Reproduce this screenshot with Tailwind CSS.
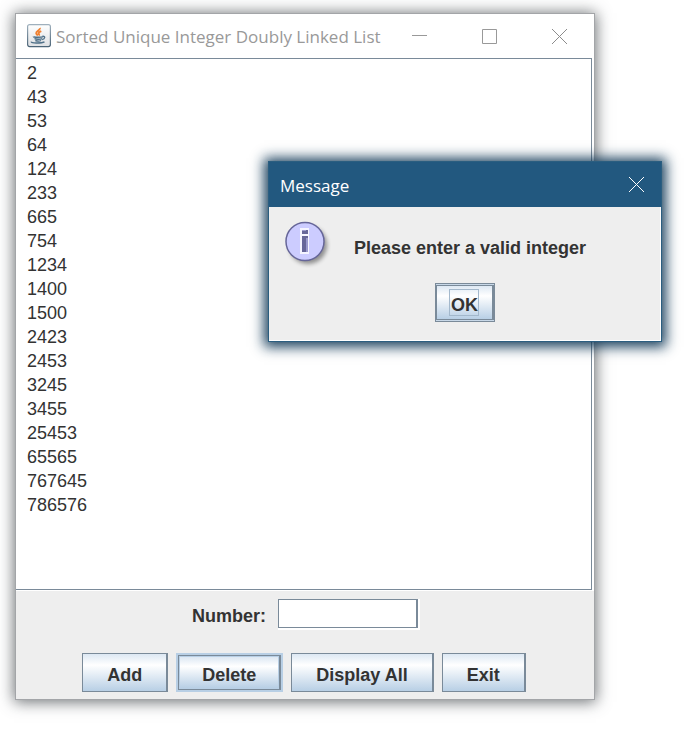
<!DOCTYPE html>
<html lang="en">
<head>
<meta charset="utf-8">
<meta name="viewport" content="width=device-width, initial-scale=1">
<title>Sorted Unique Integer Doubly Linked List</title>
<script src="https://cdn.jsdelivr.net/npm/@tailwindcss/browser@4"></script>
</head>
<body class="relative min-h-screen overflow-hidden bg-white pt-[14px] pb-[34px] pl-4 pr-[91px] font-['Liberation_Sans',Arial,sans-serif] text-lg leading-6 text-[#333333]">

<main class="flex flex-col bg-[#eeeeee] shadow-[0_0_0_1px_#a3a5a8,0_1px_14px_2px_rgba(60,65,70,0.75)]">
  <header class="flex h-11 items-center bg-white pl-[11px]">
    <svg class="h-6 w-6 shrink-0" viewBox="0 0 24 24" fill="none" aria-hidden="true">
      <defs>
        <linearGradient id="tile" x1="0" y1="0" x2="0" y2="1"><stop offset="0" stop-color="#ffffff"/><stop offset="1" stop-color="#dde0e3"/></linearGradient>
        <linearGradient id="edge" x1="0" y1="0" x2="0" y2="1"><stop offset="0" stop-color="#9fb0bd"/><stop offset="1" stop-color="#4b6477"/></linearGradient>
      </defs>
      <rect x="0.6" y="0.6" width="22.8" height="22" rx="2" fill="url(#tile)" stroke="url(#edge)" stroke-width="1.2"/>
      <path d="M12.800 4c.9 2-4 3.400-3.600 5.300.2 1 1.300 1.500 1.800 2.300M14.300 7.200c-1.700.7-2.800 1.400-2.600 2.300.1.700.9 1 .3 2" stroke="#f08030" stroke-width="1.900"/>
      <path d="M6.500 12.500c-1 .9 8.500 1 9.500 0M7.500 14.600c1 .9 6.300.9 7.500 0M8.300 16.500c1.500.6 4.700.6 5.800 0M15.500 12.300c3.200-.5 2.700 2.700-.4 3.200M4.500 17.600c-1.500 1.700 10 1.800 13 .2" stroke="#4f7088" stroke-width="1.400"/>
    </svg>
    <h1 class="ml-[5px] grow whitespace-nowrap pt-[2px] font-['Open_Sans','Segoe_UI',sans-serif] text-[17px] text-[#999999]">Sorted Unique Integer Doubly Linked List</h1>
    <div class="flex shrink-0">
      <button type="button" aria-label="Minimize" class="flex h-11 w-[70px] items-center justify-center"><svg class="h-[15px] w-[15px]" viewBox="0 0 15 15" stroke="#999999"><path d="M0 6.500H15"/></svg></button>
      <button type="button" aria-label="Maximize" class="flex h-11 w-[70px] items-center justify-center"><svg class="h-[15px] w-[15px]" viewBox="0 0 15 15" fill="none" stroke="#999999"><path d="M.5.5H14.500V14.500H.5Z"/></svg></button>
      <button type="button" aria-label="Close" class="flex h-11 w-[70px] items-center justify-center"><svg class="h-[15px] w-[15px]" viewBox="0 0 15 15" stroke="#8c8c8c"><path d="M0 0L15 15M15 0L0 15"/></svg></button>
    </div>
  </header>

  <div class="border-b border-white bg-white pr-[2px]">
    <textarea aria-label="List contents" readonly rows="22" class="block w-full resize-none overflow-hidden border-y border-r border-[#7a8a99] bg-white pt-[2px] pl-[11px] outline-none">2
43
53
64
124
233
665
754
1234
1400
1500
2423
2453
3245
3455
25453
65565
767645
786576</textarea>
  </div>

  <form class="flex flex-col items-center gap-[25px] pt-2 pb-[7px] font-bold">
    <div class="flex items-center gap-3">
      <label for="number" class="pt-1">Number:</label>
      <input id="number" type="text" class="h-[29px] w-[140px] border border-r-2 border-[#7a8a99] bg-white px-1 font-normal shadow-[1px_1px_0_1px_#ffffff] outline-none">
    </div>
    <div class="flex gap-2 pr-[2px]">
      <button type="button" class="h-[39px] border border-r-2 border-[#7a8a99] bg-linear-to-b from-[#dde8f3] via-white via-30% to-[#b8cfe5] px-[24px] pt-1">Add</button>
      <button type="button" class="border-2 border-[#b8cfe5]">
        <span class="flex h-[35px] items-center border border-r-2 border-[#7a8a99] bg-[#b8cfe5] p-px"><span class="flex h-full items-center bg-linear-to-b from-[#dde8f3] via-white via-30% to-[#b8cfe5] px-[22px] pt-1">Delete</span></span>
      </button>
      <button type="button" class="h-[39px] border border-r-2 border-[#7a8a99] bg-linear-to-b from-[#dde8f3] via-white via-30% to-[#b8cfe5] px-[24px] pt-1">Display All</button>
      <button type="button" class="h-[39px] border border-r-2 border-[#7a8a99] bg-linear-to-b from-[#dde8f3] via-white via-30% to-[#b8cfe5] px-[24px] pt-1">Exit</button>
    </div>
  </form>
</main>

<section role="dialog" aria-labelledby="dialog-title" class="absolute top-[161px] right-[23px] left-[268px] border border-[#2b5e80] bg-[#eeeeee] shadow-[0_1px_12px_4px_rgba(15,55,85,0.95)]">
  <header class="flex h-[45px] items-center justify-between bg-[#22587f] pl-[11px] text-white">
    <h2 id="dialog-title" class="pt-[2px] font-['Open_Sans','Segoe_UI',sans-serif] text-[17px]">Message</h2>
    <button type="button" aria-label="Close message" class="flex h-full w-[50px] items-center justify-center"><svg class="h-[15px] w-[15px]" viewBox="0 0 15 15" stroke="#ffffff"><path d="M0 0L15 15M15 0L0 15"/></svg></button>
  </header>
  <div class="flex flex-col items-center border-r border-b border-white pt-[14px] pb-[18px]">
    <div class="flex w-full gap-[23px] pl-4">
      <svg class="h-12 w-[46px] shrink-0" viewBox="0 0 46 48" aria-hidden="true">
        <defs><filter id="soft" x="-20%" y="-20%" width="140%" height="140%"><feGaussianBlur stdDeviation="2"/></filter></defs>
        <circle cx="23" cy="24" r="19" fill="#000000" opacity="0.4" filter="url(#soft)"/>
        <circle cx="20" cy="20.500" r="19" fill="#ccccff" stroke="#666699" stroke-width="1.500"/>
        <path d="M15 7H24V33H15Z" fill="#f4f4ff"/>
        <path d="M17 9H23V13H17ZM17 15H23V31H17Z" fill="#666699"/>
        <path d="M21 17H23V31H21ZM17 9H21V10H17Z" fill="#9999cc"/>
      </svg>
      <p class="pt-[15px] font-bold">Please enter a valid integer</p>
    </div>
    <button type="button" class="mt-[14px] h-[39px] w-[60px] border border-[#7a8a99] bg-[#c8d8e8] py-px font-bold">
      <span class="flex h-full items-center justify-center border-y border-r-2 border-l border-[#7a8a99] bg-linear-to-b from-[#dde8f3] via-white via-30% to-[#b8cfe5]">
        <span class="flex h-[27px] items-center border border-[#a3b8cc] pt-[5px] pl-px">OK</span>
      </span>
    </button>
  </div>
</section>

</body>
</html>
